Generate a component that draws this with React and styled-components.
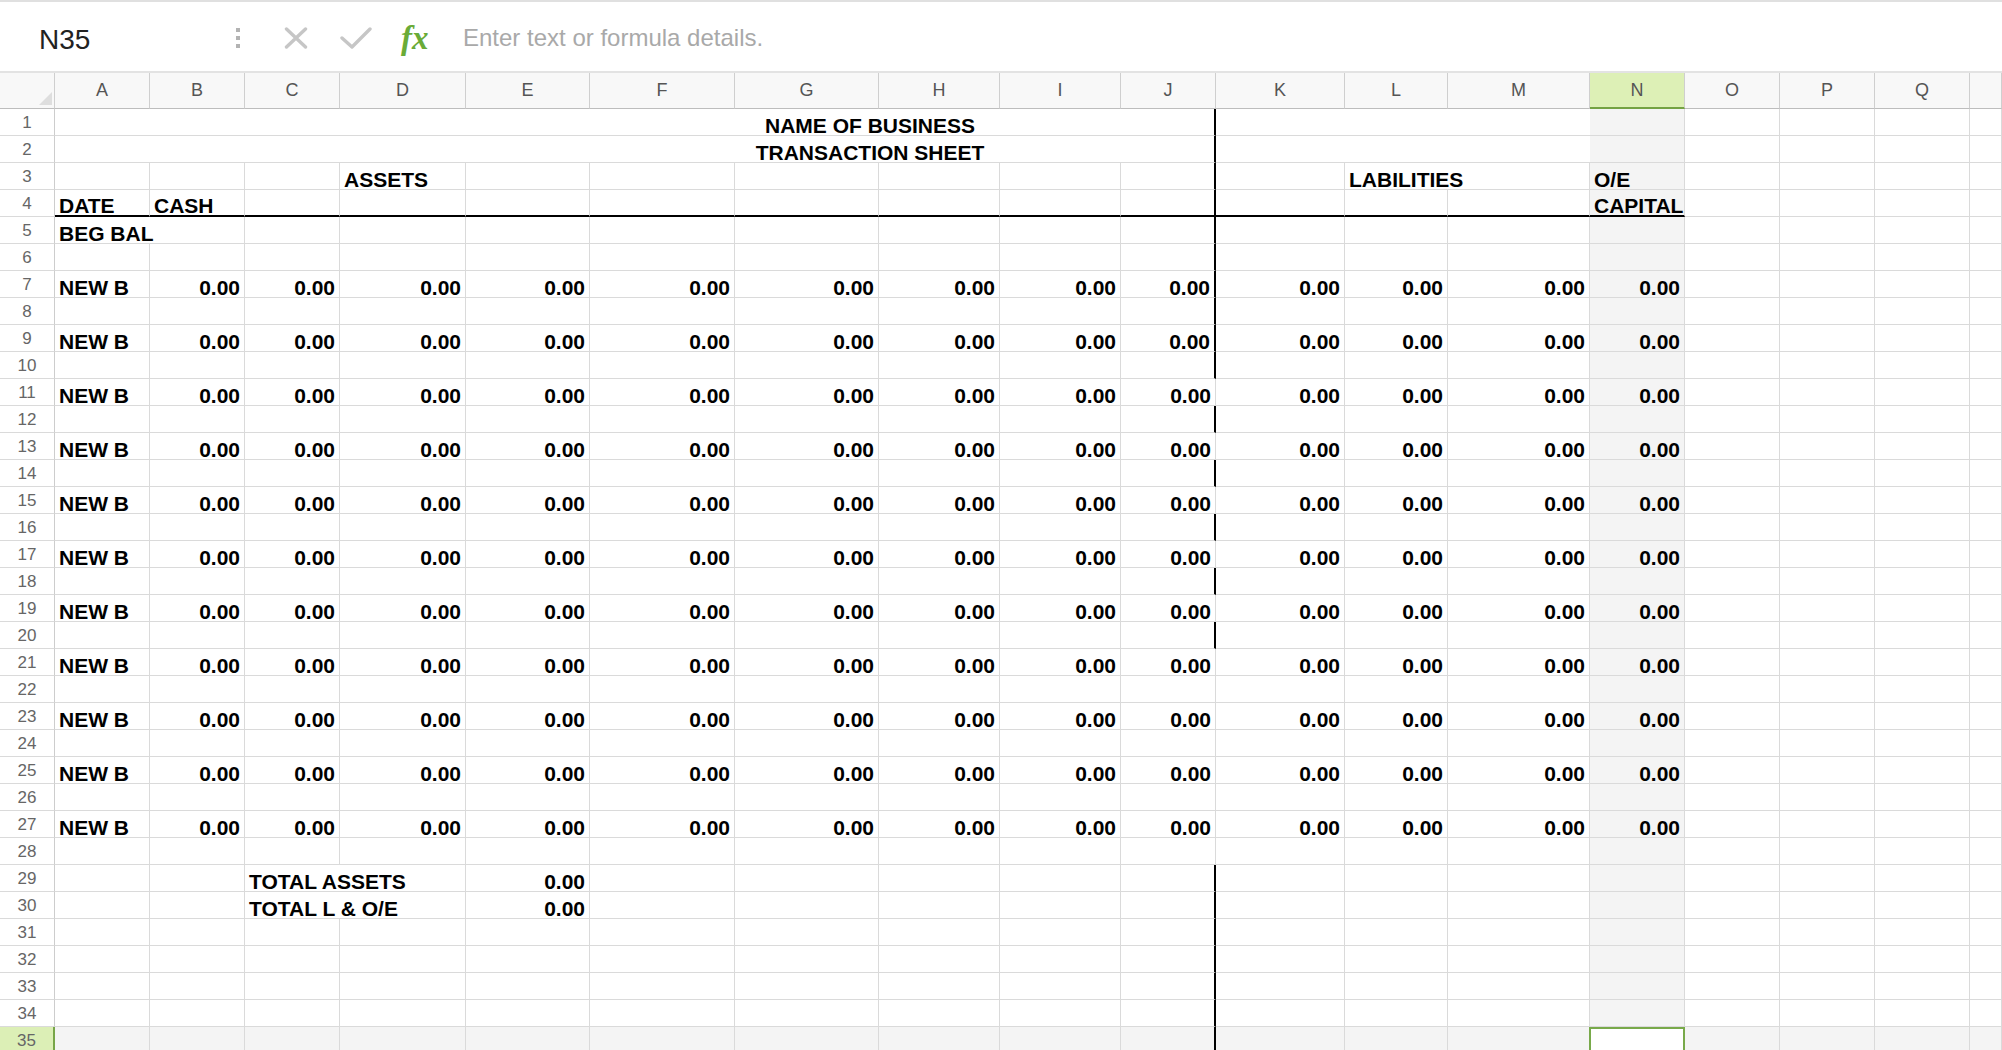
import React from 'react';
import styled, { createGlobalStyle } from 'styled-components';

const GlobalStyle = createGlobalStyle`
  html, body { margin: 0; padding: 0; background: #fff; overflow: hidden; }
  body { font-family: 'Liberation Sans', Arial, sans-serif; }
  *, *::before, *::after { box-sizing: border-box; }
`;

const COL_WIDTHS = [55, 95, 95, 95, 126, 124, 145, 144, 121, 121, 95, 129, 103, 142, 95, 95, 95, 95];
const TEMPLATE = COL_WIDTHS.map((w) => `${w}px`).join(' ') + ' 1fr';
const LETTERS = 'ABCDEFGHIJKLMNOPQ'.split('').concat(['']);
const DATA_COLS = 18; // A..Q plus the partial column
const J = 9;
const N = 13;
const ROWS = 35;
const ACTIVE_ROW = 35;
const GRID = '#dadada';
const SHADE = '#f4f4f4';

const thickRows = new Set([1, 2, 3, 4, 5, 6, 7, 8, 9, 10, 12, 14, 16, 18, 20, 29, 30, 31, 32, 33, 34, 35]);

const Page = styled.div`
  width: 2002px;
  height: 1050px;
  overflow: hidden;
  display: flex;
  flex-direction: column;
  background: #fff;
`;

const FormulaBar = styled.div`
  flex: 0 0 73px;
  height: 73px;
  border-top: 2px solid #e0e0e0;
  border-bottom: 2px solid #e3e3e3;
  display: flex;
  align-items: center;
  padding: 3px 0 0 39px;
`;

const NameBox = styled.div`
  width: 197px;
  font-size: 28px;
  color: #222;
  margin-top: 4px;
`;

const IconSlot = styled.div`
  display: flex;
  align-items: center;
  margin-right: ${(p) => p.$gap}px;
`;

const Fx = styled.span`
  display: inline-block;
  width: 30px;
  margin-right: 32px;
  font-family: 'Liberation Serif', 'Times New Roman', serif;
  font-style: italic;
  font-weight: bold;
  font-size: 33px;
  line-height: 1;
  color: #6aab37;
`;

const Placeholder = styled.div`
  font-size: 24px;
  color: #a9a9a9;
`;

const Sheet = styled.div`
  display: flex;
  flex-direction: column;
`;

const HeaderRow = styled.div`
  display: grid;
  grid-template-columns: ${TEMPLATE};
  height: 36px;
  flex: 0 0 36px;
`;

const ColHead = styled.div`
  border-right: 1px solid #cfcfcf;
  border-bottom: ${(p) => (p.$active ? '2px solid #74a243' : '1px solid #bdbdbd')};
  background: ${(p) => (p.$active ? '#ddf0b6' : '#f8f8f8')};
  display: flex;
  align-items: center;
  justify-content: center;
  font-size: 18px;
  color: #555;
`;

const Corner = styled(ColHead)`
  align-items: flex-end;
  justify-content: flex-end;
`;

const CornerMark = styled.span`
  width: 0;
  height: 0;
  border-left: 13px solid transparent;
  border-bottom: 13px solid #dedede;
  margin: 0 2px 3px 0;
`;

const Row = styled.div`
  display: grid;
  grid-template-columns: ${TEMPLATE};
  height: 27px;
  flex: 0 0 27px;
`;

const RowHead = styled.div`
  grid-row: 1;
  grid-column: 1;
  border-right: ${(p) => (p.$active ? '2px solid #77a548' : '1px solid #cdcdcd')};
  border-bottom: 1px solid ${GRID};
  background: ${(p) => (p.$active ? '#dcefb6' : '#fff')};
  display: flex;
  align-items: center;
  justify-content: center;
  padding-top: 2px;
  font-size: 17px;
  color: #666;
`;

const borderFor = (kind) => {
  if (kind === 'none') return '0';
  if (kind === 'thick') return '2px solid #000';
  return `1px solid ${GRID}`;
};

const Cell = styled.div`
  grid-row: 1;
  grid-column: ${(p) => p.$col} / span ${(p) => p.$span};
  height: 27px;
  border-right: ${(p) => borderFor(p.$right)};
  border-bottom: ${(p) => (p.$thickBottom ? '2px solid #000' : `1px solid ${GRID}`)};
  background: ${(p) => p.$bg};
  display: flex;
  align-items: flex-end;
  justify-content: ${(p) => (p.$alignRight ? 'flex-end' : 'flex-start')};
  padding: 0 4px;
  font-size: 21px;
  font-weight: bold;
  line-height: 19px;
  color: #000;
  white-space: nowrap;
`;

const SelectedCell = styled.div`
  grid-row: 1;
  grid-column: ${(p) => p.$col};
  height: 27px;
  margin-left: -1px;
  border: 2px solid #78a94a;
  background: #fff;
`;

const Title = styled.div`
  grid-row: 1;
  grid-column: 2 / span 14;
  z-index: 1;
  display: flex;
  align-items: flex-end;
  justify-content: center;
  padding-bottom: 1px;
  font-size: 21px;
  font-weight: bold;
  line-height: 19px;
  color: #000;
  pointer-events: none;
`;

function rowContent(r) {
  const c = {};
  if (r === 3) {
    c[3] = { t: 'ASSETS' };
    c[11] = { t: 'LABILITIES', span: 2 };
    c[13] = { t: 'O/E' };
  }
  if (r === 4) {
    c[0] = { t: 'DATE' };
    c[1] = { t: 'CASH' };
    c[13] = { t: 'CAPITAL' };
  }
  if (r === 5) c[0] = { t: 'BEG BAL', span: 2 };
  if (r >= 7 && r <= 27 && r % 2 === 1) {
    c[0] = { t: 'NEW B' };
    for (let i = 1; i <= N; i += 1) c[i] = { t: '0.00', right: true };
  }
  if (r === 29) {
    c[2] = { t: 'TOTAL ASSETS', span: 2 };
    c[4] = { t: '0.00', right: true };
  }
  if (r === 30) {
    c[2] = { t: 'TOTAL L & O/E', span: 2 };
    c[4] = { t: '0.00', right: true };
  }
  return c;
}

const TITLES = { 1: 'NAME OF BUSINESS', 2: 'TRANSACTION SHEET' };

function rightKind(r, last) {
  if (last === J && thickRows.has(r)) return 'thick';
  if ((r === 1 || r === 2) && last < N && last !== J) return 'none';
  return 'normal';
}

function SheetRow({ r }) {
  const content = rowContent(r);
  const active = r === ACTIVE_ROW;
  const cells = [];
  for (let i = 0; i < DATA_COLS; ) {
    const spec = content[i] || {};
    const span = spec.span || 1;
    const last = i + span - 1;
    if (active && i === N) {
      cells.push(<SelectedCell key={i} $col={i + 2} />);
    } else {
      const shaded = active || i === N;
      cells.push(
        <Cell
          key={i}
          $col={i + 2}
          $span={span}
          $right={rightKind(r, last)}
          $thickBottom={r === 4 && i <= N}
          $bg={shaded ? SHADE : '#fff'}
          $alignRight={!!spec.right}
        >
          {spec.t || ''}
        </Cell>
      );
    }
    i += span;
  }
  return (
    <Row>
      <RowHead $active={active}>{r}</RowHead>
      {cells}
      {TITLES[r] && <Title>{TITLES[r]}</Title>}
    </Row>
  );
}

const CloseIcon = () => (
  <svg width="24" height="22" viewBox="0 0 24 22">
    <path d="M2.5 2 L21.5 20 M21.5 2 L2.5 20" stroke="#c6c6c6" strokeWidth="3.4" strokeLinecap="round" fill="none" />
  </svg>
);

const CheckIcon = () => (
  <svg width="32" height="22" viewBox="0 0 32 22">
    <path d="M2 11 L12 20 L30 2" stroke="#c6c6c6" strokeWidth="3.4" strokeLinecap="round" strokeLinejoin="round" fill="none" />
  </svg>
);

const DotsIcon = () => (
  <svg width="4" height="20" viewBox="0 0 4 20">
    <rect x="0" y="0" width="4" height="4" fill="#b3b3b3" />
    <rect x="0" y="8" width="4" height="4" fill="#b3b3b3" />
    <rect x="0" y="16" width="4" height="4" fill="#b3b3b3" />
  </svg>
);

export default function App() {
  const rows = [];
  for (let r = 1; r <= ROWS; r += 1) rows.push(<SheetRow key={r} r={r} />);
  return (
    <>
      <GlobalStyle />
      <Page>
        <FormulaBar>
          <NameBox>N35</NameBox>
          <IconSlot $gap={44}>
            <DotsIcon />
          </IconSlot>
          <IconSlot $gap={32}>
            <CloseIcon />
          </IconSlot>
          <IconSlot $gap={29}>
            <CheckIcon />
          </IconSlot>
          <Fx>fx</Fx>
          <Placeholder>Enter text or formula details.</Placeholder>
        </FormulaBar>
        <Sheet>
          <HeaderRow>
            <Corner>
              <CornerMark />
            </Corner>
            {LETTERS.map((l, i) => (
              <ColHead key={i} $active={i === N}>
                {l}
              </ColHead>
            ))}
          </HeaderRow>
          {rows}
        </Sheet>
      </Page>
    </>
  );
}
